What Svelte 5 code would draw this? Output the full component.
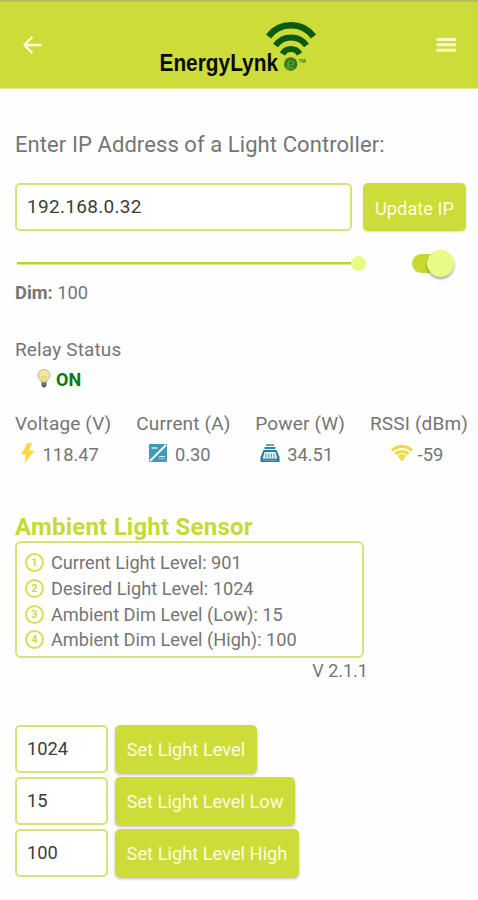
<script lang="ts">
	let ipAddress = '192.168.0.32';
	let dim = 100;
	let relayOn = true;

	const version = 'V 2.1.1';

	const readings = [
		{ label: 'Voltage (V)', value: '118.47', icon: 'bolt' },
		{ label: 'Current (A)', value: '0.30', icon: 'current' },
		{ label: 'Power (W)', value: '34.51', icon: 'power' },
		{ label: 'RSSI (dBm)', value: '-59', icon: 'wifi' }
	];

	const sensor = [
		{ label: 'Current Light Level', value: 901 },
		{ label: 'Desired Light Level', value: 1024 },
		{ label: 'Ambient Dim Level (Low)', value: 15 },
		{ label: 'Ambient Dim Level (High)', value: 100 }
	];

	let settings = [
		{ label: 'Set Light Level', value: '1024', size: 'normal' },
		{ label: 'Set Light Level Low', value: '15', size: 'low' },
		{ label: 'Set Light Level High', value: '100', size: 'high' }
	];
</script>

<header>
	<button class="icon-button" type="button" aria-label="Back">
		<svg width="20" height="20" viewBox="0 0 20 20">
			<path
				d="M10.500 1.800 2.300 10l8.200 8.200M2.300 10h17"
				fill="none"
				stroke="#fbffd9"
				stroke-width="2.300"
				stroke-linejoin="round"
			/>
		</svg>
	</button>
	<svg class="logo" width="160" height="64" viewBox="0 0 160 64">
		<text x="0.500" y="57.800" textLength="118.500" lengthAdjust="spacingAndGlyphs">EnergyLynk</text>
		<g fill="none" stroke="#0b5a12">
			<path d="M109.500 23.500a28.200 28.200 0 0 1 45 0" stroke-width="6.500" />
			<path d="M116.500 32.500a19 19 0 0 1 31 0" stroke-width="6" />
			<path d="M123.500 41a9.800 9.800 0 0 1 17 0" stroke-width="6" />
		</g>
		<circle cx="131.700" cy="51" r="6.700" fill="#327d1b" />
		<path
			d="M129.500 54.500v-6.500h3.500a2 2 0 0 1 0 4h-3.500M128 50v5h7"
			fill="none"
			stroke="#6fa52c"
			stroke-width="1"
		/>
		<text class="tm" x="139.500" y="49.500">TM</text>
	</svg>
	<button class="icon-button" type="button" aria-label="Menu">
		<svg width="20" height="16" viewBox="0 0 20 16">
			<path d="M.5 2.500H20M.5 7.800H20M.5 13.200H20" stroke="#f8fcc2" stroke-width="2.900" />
		</svg>
	</button>
</header>

<main>
	<label class="prompt" for="ip">Enter IP Address of a Light Controller:</label>
	<div class="ip-row">
		<input id="ip" type="text" bind:value={ipAddress} />
		<button class="action update" type="button">Update IP</button>
	</div>

	<div class="dim-row">
		<input
			class="slider"
			type="range"
			min="0"
			max="100"
			bind:value={dim}
			aria-label="Dim"
		/>
		<button
			class="switch"
			class:on={relayOn}
			type="button"
			aria-label="Relay"
			on:click={() => (relayOn = !relayOn)}
		>
			<span></span>
		</button>
	</div>
	<p class="dim"><b>Dim:</b> {dim}</p>

	<p class="relay">Relay Status</p>
	<div class="relay-state">
		<svg width="14" height="20" viewBox="0 0 14 20">
			<path
				d="M4.500 13.500C4 11 1 10 1 6.500a6 6 0 0 1 12 0c0 3.500-3 4.500-3.500 7z"
				fill="#f1e99a"
				stroke="#b9b5a0"
				stroke-width="1"
			/>
			<path d="M5.500 13 5 7l2 1.500L9 7l-.5 6" fill="none" stroke="#d8c77c" stroke-width=".8" />
			<path d="M4.500 13.500h5v3l-1.500 2H6l-1.500-2z" fill="#55585c" />
			<path d="M4.500 15h5" stroke="#a0a2a5" stroke-width=".8" />
		</svg>
		<b>{relayOn ? 'ON' : 'OFF'}</b>
	</div>

	<div class="readings">
		{#each readings as reading}
			<div class="reading {reading.icon}">
				<span class="name">{reading.label}</span>
				<span class="value">
					{#if reading.icon === 'bolt'}
						<svg width="14" height="20" viewBox="0 0 14 20">
							<path d="M6.500 0 0 11.500h5L3.500 20 13.500 7.500H8L11 0z" fill="#ffd83d" />
						</svg>
					{:else if reading.icon === 'current'}
						<svg width="18" height="18" viewBox="0 0 18 18">
							<rect width="18" height="18" rx="1" fill="#3c9cb8" />
							<path d="M1 17 17 1" stroke="#fff" stroke-width="1.800" />
							<path d="M2.500 4h6" stroke="#e9f7fa" stroke-width="1.300" />
							<path d="M10 12.500h6M10 14.700h1.500m1 0H14m1 0h1" stroke="#d5edf3" stroke-width="1.100" />
						</svg>
					{:else if reading.icon === 'power'}
						<svg width="20" height="18" viewBox="0 0 20 18">
							<path d="M6 1h8" stroke="#4a9db8" stroke-width="1.800" />
							<path d="M4.500 4h11" stroke="#2f86a6" stroke-width="2" />
							<path d="M3.500 6h13L19.500 13v5H.5v-5z" fill="#2c7898" />
							<path d="M4.500 8h11l1.800 6.500H2.700z" fill="#e6f3f7" />
							<path
								d="M6 9.500v4m2.700-4v4m2.700-4v4m2.700-4v4"
								stroke="#5e9bb2"
								stroke-width="1.200"
							/>
							<path d="M3 16.200h14" stroke="#8fbccc" stroke-width=".8" />
						</svg>
					{:else}
						<svg width="22" height="16" viewBox="0 0 22 16">
							<g fill="none" stroke="#f0d93c" stroke-width="3.100">
								<path d="M1 5.500a14.500 14.500 0 0 1 20 0" />
								<path d="M4.500 9a9.500 9.500 0 0 1 13 0" />
								<path d="M7.700 12a5 5 0 0 1 6.600 0" />
							</g>
							<circle cx="11" cy="13.800" r="1.900" fill="#f0d93c" />
						</svg>
					{/if}
					{reading.value}
				</span>
			</div>
		{/each}
	</div>

	<h2>Ambient Light Sensor</h2>
	<ol>
		{#each sensor as item, i}
			<li><span class="number">{i + 1}</span>{item.label}: {item.value}</li>
		{/each}
	</ol>
	<p class="version">{version}</p>

	<div class="settings">
		{#each settings as setting}
			<div class="setting">
				<input type="text" bind:value={setting.value} aria-label={setting.label} />
				<button class="action {setting.size}" type="button">{setting.label}</button>
			</div>
		{/each}
	</div>
</main>

<style>
	:global(body) {
		background: #fefefe;
		font-family: Roboto, sans-serif;
		color: #757575;
	}

	header {
		height: 89px;
		box-sizing: border-box;
		padding: 0 22px;
		display: flex;
		justify-content: space-between;
		align-items: center;
		background: #cddc39;
		border-top: 2px solid #b2bf61;
		border-bottom: 1px solid #e3eb92;
	}

	.icon-button {
		width: 20px;
		height: 20px;
		padding: 0;
		border: 0;
		background: none;
		display: flex;
		align-items: center;
		justify-content: center;
	}

	.logo text {
		font: bold 24.500px 'Liberation Sans', Arial, sans-serif;
		fill: #080b02;
	}

	.logo .tm {
		font-size: 5px;
		fill: #3f8220;
	}

	main {
		padding: 0 10px 22px 15px;
	}

	p,
	h2,
	ol {
		margin: 0;
		padding: 0;
	}

	.prompt {
		display: block;
		margin-top: 42px;
		line-height: 28px;
		font-size: 22px;
		letter-spacing: 0.08px;
		white-space: nowrap;
	}

	input[type='text'] {
		box-sizing: border-box;
		height: 48px;
		padding: 0 10px 1px;
		border: 2px solid #d5e378;
		border-radius: 5px;
		background: #fff;
		color: #3c3c3c;
		font-family: inherit;
		font-size: 19px;
		letter-spacing: 0.3px;
	}

	.ip-row {
		margin-top: 24px;
		display: flex;
		gap: 11px;
	}

	#ip {
		width: 337px;
	}

	.action {
		height: 48px;
		padding: 1px 0 0;
		border: 0;
		border-radius: 5px;
		background: #cddc39;
		box-shadow: 0 2px 3px rgba(0, 0, 0, 0.25);
		color: #fbffdc;
		font-family: inherit;
		font-size: 18.300px;
		white-space: nowrap;
	}

	.update {
		width: 103px;
		padding-top: 2px;
		box-shadow: 0 1px 2px rgba(120, 130, 30, 0.25);
	}

	.dim-row {
		height: 32px;
		margin-top: 16px;
		display: flex;
		align-items: center;
	}

	.slider {
		appearance: none;
		width: 349px;
		height: 16px;
		margin: 0 0 0 2px;
		background: linear-gradient(#c0d136, #c0d136) 0 50% / 342px 2.500px no-repeat;
	}

	.slider::-webkit-slider-thumb {
		appearance: none;
		width: 15px;
		height: 15px;
		border-radius: 50%;
		background: #e9fa86;
	}

	.switch {
		width: 40px;
		height: 19px;
		margin-left: 46px;
		padding: 0;
		border: 0;
		border-radius: 10px;
		display: flex;
		align-items: center;
		background: #ccc;
	}

	.switch.on {
		justify-content: flex-end;
		background: #c6d92f;
	}

	.switch span {
		width: 27px;
		height: 27px;
		flex-shrink: 0;
		margin-right: -2px;
		border-radius: 50%;
		background: #e9fa86;
		box-shadow: 0 2px 3px rgba(0, 0, 0, 0.35);
	}

	.dim {
		margin-top: 2px;
		line-height: 24px;
		font-size: 18.300px;
	}

	.relay {
		margin-top: 33px;
		line-height: 24px;
		font-size: 19px;
		letter-spacing: 0.15px;
	}

	.relay-state {
		margin: 6px 0 0 22px;
		height: 22px;
		display: flex;
		align-items: center;
		gap: 5px;
		color: #087a0b;
		font-size: 18px;
	}

	.readings {
		margin-top: 21px;
		display: flex;
		justify-content: space-between;
		font-size: 19px;
		letter-spacing: 0.15px;
		white-space: nowrap;
	}

	.reading {
		display: flex;
		flex-direction: column;
		align-items: center;
	}

	.name {
		line-height: 26px;
	}

	.value {
		height: 26px;
		margin-top: 4px;
		padding-right: 7px;
		display: flex;
		align-items: center;
		gap: 8px;
		font-size: 18.300px;
		letter-spacing: 0;
	}

	.power .value {
		gap: 7px;
	}

	.wifi .value {
		padding-right: 4px;
		gap: 5px;
	}

	.value svg {
		margin-top: -2px;
	}

	h2 {
		margin-top: 45px;
		line-height: 30px;
		font-size: 24px;
		font-weight: bold;
		letter-spacing: 0.22px;
		color: #c6da35;
	}

	ol {
		box-sizing: border-box;
		width: 349px;
		height: 117px;
		margin-top: -1px;
		padding: 7px 8px 0;
		border: 2px solid #d5e378;
		border-radius: 6px;
		list-style: none;
		font-size: 18.200px;
	}

	li {
		height: 25.700px;
		display: flex;
		align-items: center;
	}

	.number {
		box-sizing: border-box;
		width: 19px;
		height: 19px;
		margin-right: 7px;
		border: 2px solid #d2e252;
		border-radius: 50%;
		text-align: center;
		line-height: 15px;
		font-size: 11px;
		font-weight: bold;
		color: #c8dc4c;
	}

	.version {
		width: 353px;
		margin-top: 1px;
		line-height: 24px;
		text-align: right;
		font-size: 18px;
	}

	.settings {
		margin-top: 42px;
		display: flex;
		flex-direction: column;
		gap: 4px;
	}

	.setting {
		display: flex;
		gap: 7px;
	}

	.setting input {
		width: 93px;
		font-size: 18.300px;
		letter-spacing: 0;
	}

	.normal {
		width: 142px;
	}

	.low {
		width: 180px;
	}

	.high {
		width: 184px;
	}
</style>
